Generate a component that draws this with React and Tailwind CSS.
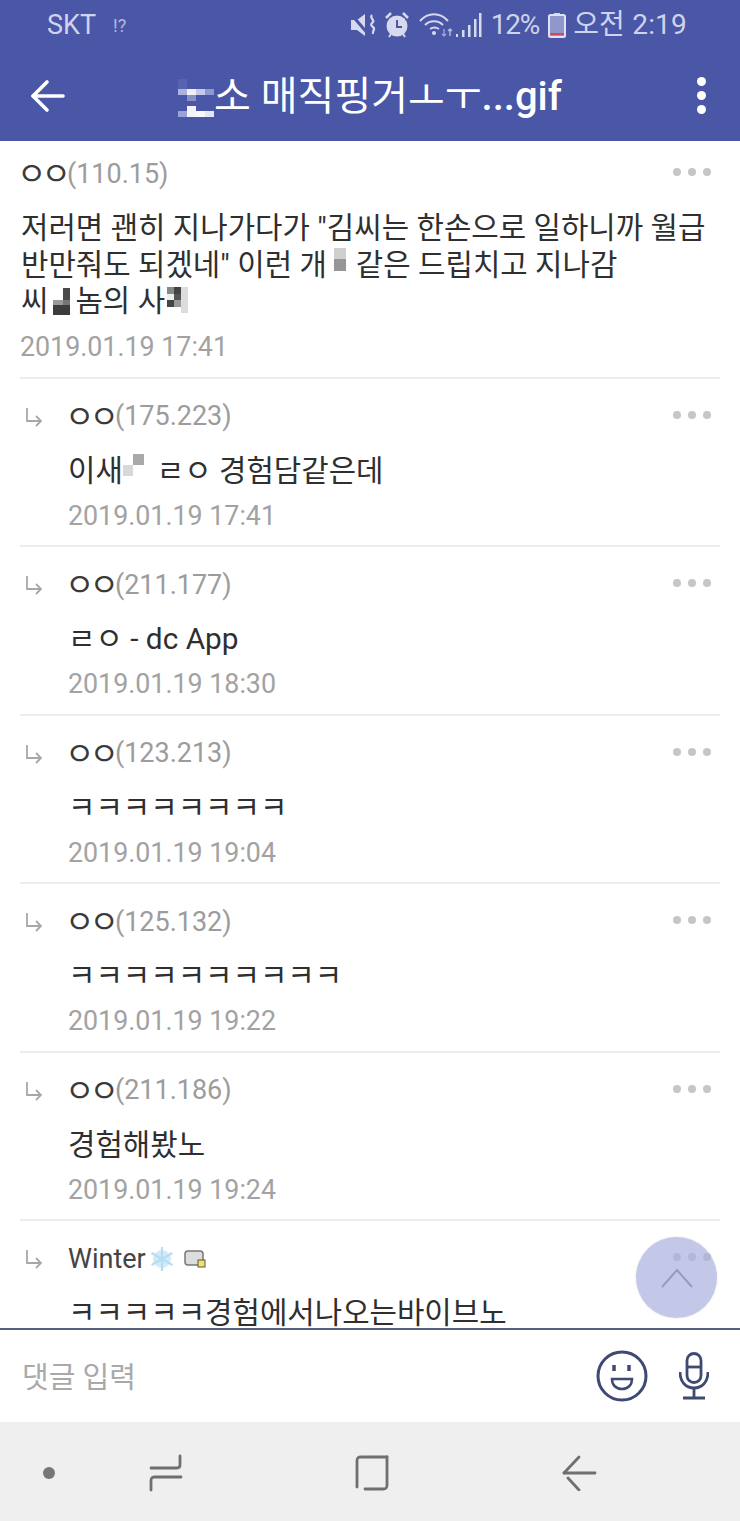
const replies = [
  { ip: "(175.223)", date: "2019.01.19 17:41", body: <>이새<CurseMosaic />ㄹㅇ 경험담같은데</> },
  { ip: "(211.177)", date: "2019.01.19 18:30", body: "ㄹㅇ - dc App" },
  { ip: "(123.213)", date: "2019.01.19 19:04", body: "ㅋㅋㅋㅋㅋㅋㅋㅋ" },
  { ip: "(125.132)", date: "2019.01.19 19:22", body: "ㅋㅋㅋㅋㅋㅋㅋㅋㅋㅋ" },
  { ip: "(211.186)", date: "2019.01.19 19:24", body: "경험해봤노" },
];

function Dots() {
  return (
    <div className="mb-[2px] flex gap-[7px]">
      <span className="h-2 w-2 rounded-full bg-[#c6c6c6]" />
      <span className="h-2 w-2 rounded-full bg-[#c6c6c6]" />
      <span className="h-2 w-2 rounded-full bg-[#c6c6c6]" />
    </div>
  );
}

function ReplyArrow() {
  return (
    <svg width="18" height="20" viewBox="0 0 18 20" fill="none" stroke="#a8a8a8" strokeWidth="1.8" className="shrink-0">
      <path d="M2 1v13h14" />
      <path d="M11 9l5 5-5 5" />
    </svg>
  );
}

// ㅇㅇ is drawn much wider than the stock jamo glyph, hence the big size + tight tracking
function Anon() {
  return <span className="-ml-[5px] mr-[1px] text-[32px] leading-none tracking-[-5px] text-[#3a3a3a]">ㅇㅇ</span>;
}

function CurseMosaic() {
  return (
    <span className="mr-[13px] mt-[1px] grid grid-cols-[10px_11px] grid-rows-[11px_11px] self-start">
      <span />
      <span className="bg-[#a9a9a9]" />
      <span className="bg-[#d8d8d8]" />
      <span />
    </span>
  );
}

function TitleMosaic() {
  return (
    <span className="mt-[2px] grid grid-cols-[repeat(4,9px)] grid-rows-[10px_6px_6px_5px_5px_6px]">
      <span className="bg-[#6670b8]/50" /><span /><span /><span />
      <span className="bg-[#aab2de]" /><span className="bg-[#eef0fa]" /><span className="bg-[#c3c9e8]" /><span className="bg-[#8f98cf]" />
      <span /><span className="bg-[#8890c4]" /><span /><span />
      <span /><span /><span /><span />
      <span /><span className="bg-[#f2f3fb]" /><span /><span />
      <span className="bg-[#9aa3d5]" /><span className="bg-[#f2f3fb]" /><span className="bg-[#f7f8fd]" /><span className="bg-[#e4e7f6]" />
    </span>
  );
}

function Reply({ name, ip, body, date }) {
  return (
    <div className="flex pl-[5px] pr-[9px] pt-[27px]">
      <div className="w-[43px] pt-[1px]"><ReplyArrow /></div>
      <div className="flex-1">
        <div className="flex h-5 items-center justify-between">
          <div className="flex items-center whitespace-nowrap pl-[2px] pt-[2px] text-[27px]">
            {name || <Anon />}
            {ip && <span className="text-[#9c9c9c]">{ip}</span>}
          </div>
          <Dots />
        </div>
        <div className="mt-[27px] flex h-[36px] items-center whitespace-pre text-[29.8px] leading-[36px] text-[#2f2f2f]">{body}</div>
        {date && <div className="mt-[9px] text-[26.8px] leading-[36px] text-[#a2a2a2]">{date}</div>}
      </div>
    </div>
  );
}

function StatusIcons() {
  return (
    <>
      <svg width="28" height="26" viewBox="0 0 28 26" fill="#d7daee" className="mr-[6px]">
        <path d="M1 8h6l8-6v22l-8-6H1z" />
        <path d="M1 2l18 21" stroke="#4a56a6" strokeWidth="3" />
        <path d="M22 3c-3 3 3 5 1 7s-3 3 0 5-1 4 0 7" fill="none" stroke="#d7daee" strokeWidth="2.200" />
      </svg>
      <svg width="26" height="28" viewBox="0 0 26 28" className="mr-[9px]">
        <circle cx="13" cy="15" r="10.5" fill="#d7daee" />
        <path d="M13 9v7h5" fill="none" stroke="#4a56a6" strokeWidth="2" />
        <path d="M2 7l5-5M24 7l-5-5" stroke="#d7daee" strokeWidth="2.500" />
        <path d="M5 26l2-3M21 26l-2-3" stroke="#d7daee" strokeWidth="2" />
      </svg>
      <svg width="34" height="26" viewBox="0 0 34 26" fill="none" stroke="#d7daee" strokeWidth="2" className="mr-[3px]">
        <path d="M1 9c8-9 20-9 28 0" />
        <path d="M6 13c5-5 13-5 18 0" />
        <path d="M11 17c3-2 6-2 9 0" />
        <circle cx="15" cy="21" r="2" fill="#d7daee" stroke="none" />
        <path d="M25 17v7M23 22l2 2 2-2" stroke="#9aa3d5" strokeWidth="1.400" />
        <path d="M31 24v-7M29 19l2-2 2 2" stroke="#b9bfe2" strokeWidth="1.400" />
      </svg>
      <svg width="26" height="26" viewBox="0 0 26 26" fill="#d7daee" className="mr-[9px]">
        <path d="M0 22h2v3H0zM6 18h2.500v7H6zM12 13h2.500v12H12zM18 7h2.500v18H18zM23 1h2.500v24H23z" />
      </svg>
    </>
  );
}

export default function App() {
  return (
    <div className="relative flex h-[1521px] w-[740px] flex-col overflow-hidden bg-white font-[Roboto,'Noto_Sans_CJK_KR',sans-serif]">
      <header className="h-[141px] shrink-0 bg-[#4a56a6]">
        <div className="flex h-[50px] items-center pl-[47px] pr-[53px] text-[#cfd3eb]">
          <span className="text-[27px]">SKT</span>
          <span className="ml-[17px] text-[18px] opacity-80">!?</span>
          <div className="ml-auto flex items-center">
            <StatusIcons />
            <span className="text-[28px] tracking-[-1.2px]">12%</span>
            <svg width="18" height="25" viewBox="0 0 18 25" className="ml-[9px]">
              <path d="M6 0h6v2H6z" fill="#cfd3eb" />
              <rect x="1" y="2" width="16" height="22" rx="1.500" fill="#8f97cb" stroke="#dfe2f3" strokeWidth="2" />
              <path d="M2 20h14v2H2z" fill="#d04a5a" />
            </svg>
            <span className="ml-[7px] text-[28px] tracking-[0.2px]">오전 2:19</span>
          </div>
        </div>
        <div className="flex h-[91px] items-center pl-[30px] pr-[34px]">
          <svg width="36" height="34" viewBox="0 0 36 34" fill="none" stroke="#fff" strokeWidth="3.600" strokeLinecap="round" strokeLinejoin="round" className="shrink-0">
            <path d="M33 17H3" />
            <path d="M17 3L3 17l14 14" />
          </svg>
          <div className="mr-[23px] flex flex-1 items-center justify-center whitespace-pre pt-[2px] text-[40px] leading-[46px] text-white">
            <TitleMosaic />
            <span>소 매직핑거ㅗㅜ<span className="font-medium">...gif</span></span>
          </div>
          <div className="flex flex-col gap-[5px]">
            <span className="h-[9px] w-[9px] rounded-full bg-white" />
            <span className="h-[9px] w-[9px] rounded-full bg-white" />
            <span className="h-[9px] w-[9px] rounded-full bg-white" />
          </div>
        </div>
      </header>

      <main className="h-[1187px] shrink-0 overflow-hidden">
        <div className="mx-5 h-[237.500px] border-b-2 border-[#ececec] pt-[18px]">
          <div className="flex h-7 items-center justify-between pl-[2px] pr-[9px]">
            <div className="flex items-center whitespace-nowrap pt-[2px] text-[27px]">
              <Anon />
              <span className="text-[#9c9c9c]">(110.15)</span>
            </div>
            <Dots />
          </div>
          <div className="mt-[23px] pl-[1px] text-[29.8px] leading-[36.5px] text-[#2f2f2f]">
            <div className="whitespace-pre">저러면 괜히 지나가다가 "김씨는 한손으로 일하니까 월급</div>
            <div className="flex h-[36.5px] items-center whitespace-pre">
              반만줘도 되겠네" 이런 개
              <span className="ml-[7px] mr-[10px] mt-[1px] grid w-[12px] grid-rows-[11px_12px] self-start">
                <span className="bg-[#cfcfcf]" />
                <span className="bg-[#969696]" />
              </span>
              같은 드립치고 지나감
            </div>
            <div className="flex h-[36.5px] items-center whitespace-pre">
              씨
              <span className="mx-[5px] mt-[5px] grid grid-cols-[10px_7px] grid-rows-[12px_5px_10px] self-start">
                <span /><span className="bg-[#4a4a4a]" />
                <span className="bg-[#9a9a9a]" /><span className="bg-[#777]" />
                <span className="bg-[#3d3d3d]" /><span className="bg-[#3d3d3d]" />
              </span>
              놈의 사
              <span className="ml-[2px] mt-[4px] grid grid-cols-[repeat(3,7px)] grid-rows-[repeat(4,6.5px)] self-start">
                <span className="bg-[#888]" /><span className="bg-[#444]" /><span className="bg-[#ddd]" />
                <span className="bg-[#eee]" /><span className="bg-[#555]" /><span className="bg-[#ddd]" />
                <span className="bg-[#444]" /><span className="bg-[#999]" /><span className="bg-[#ddd]" />
                <span /><span /><span className="bg-[#ddd]" />
              </span>
            </div>
          </div>
          <div className="mt-[9.500px] text-[26.8px] leading-[36px] text-[#a2a2a2]">2019.01.19 17:41</div>
        </div>

        {replies.map((r) => (
          <div key={r.ip} className="mx-5 h-[168.500px] border-b-2 border-[#ececec]">
            <Reply ip={r.ip} body={r.body} date={r.date} />
          </div>
        ))}

        <div className="mx-5">
          <Reply
            name={
              <span className="-ml-[2px] inline-flex items-center text-[#444]">
                Winter
                <svg width="26" height="26" viewBox="0 0 26 26" fill="none" stroke="#b4dcf3" strokeWidth="2.200" className="ml-[3px]">
                  <circle cx="13" cy="13" r="9" fill="#d3eaf8" stroke="none" />
                  <path d="M13 1v24M2.600 7l20.800 12M2.600 19l20.800-12" />
                </svg>
                <svg width="22" height="20" viewBox="0 0 22 20" className="ml-[9px]">
                  <rect x="1" y="2" width="18" height="14" rx="3" fill="#ddd" stroke="#777" strokeWidth="1.500" />
                  <rect x="14" y="11" width="7" height="7" fill="#f3e25a" stroke="#555" strokeWidth="1" />
                </svg>
              </span>
            }
            body="ㅋㅋㅋㅋㅋ경험에서나오는바이브노"
          />
        </div>
      </main>

      <div className="h-[2px] shrink-0 bg-[#565f7b]" />

      <div className="flex h-[92px] shrink-0 items-center pl-[22px] pr-[31px]">
        <span className="pt-[5px] text-[29px] text-[#a9a9a9]">댓글 입력</span>
        <svg width="52" height="52" viewBox="0 0 52 52" fill="none" stroke="#3f4a73" strokeWidth="3" className="ml-auto">
          <circle cx="26" cy="26" r="24" />
          <path d="M18 15v6M33 15v6" strokeWidth="3.500" />
          <path d="M16 29h20c0 6-4 10-10 10s-10-4-10-10z" strokeWidth="2.500" />
        </svg>
        <svg width="30" height="48" viewBox="0 0 30 48" fill="none" stroke="#3f4a73" strokeWidth="2.800" className="ml-[31px]">
          <rect x="8" y="1.500" width="14" height="29" rx="7" />
          <path d="M8 15h14" />
          <path d="M1 20c0 10 6 16 14 16s14-6 14-16" />
          <path d="M15 36v9M4 46h22" />
        </svg>
      </div>

      <nav className="flex flex-1 items-center bg-[#efefef] pl-[43px] pt-[2px]">
        <span className="h-3 w-3 rounded-full bg-[#777]" />
        <svg width="34" height="38" viewBox="0 0 34 38" fill="none" stroke="#6f6f6f" strokeWidth="2.800" strokeLinecap="round" className="ml-[94px]">
          <path d="M31 2v9c0 2-1 3-3 3H2" />
          <path d="M32 23H6c-3 0-4 1-4 4v9" />
        </svg>
        <svg width="34" height="36" viewBox="0 0 34 36" fill="none" stroke="#6f6f6f" strokeWidth="2.800" strokeLinecap="round" className="ml-[172px]">
          <path d="M2 32V6c0-3 1-4 4-4h26" />
          <path d="M32 2v28c0 3-1 4-4 4H10" />
        </svg>
        <svg width="36" height="36" viewBox="0 0 36 36" fill="none" stroke="#6f6f6f" strokeWidth="2.800" strokeLinecap="round" className="ml-[173px]">
          <path d="M33 18H2" />
          <path d="M17 2L2 18" />
          <path d="M6 23l11 12" />
        </svg>
      </nav>

      <button className="absolute left-[636px] top-[1237px] flex h-[81px] w-[81px] items-center justify-center rounded-full bg-[#a9b0de]/70 shadow-[0_0_2px_rgba(0,0,0,0.15)]">
        <svg width="32" height="20" viewBox="0 0 32 20" fill="none" stroke="#959cc0" strokeWidth="2">
          <path d="M1 19L16 2l15 17" />
        </svg>
      </button>
    </div>
  );
}
